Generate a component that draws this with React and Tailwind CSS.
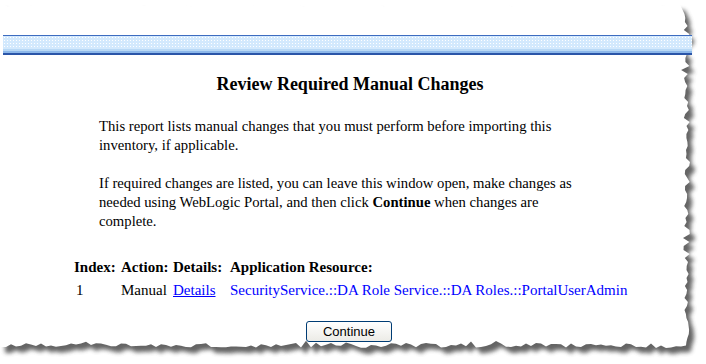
import React from 'react';

// torn paper edge, deterministic noise
const rand=(()=>{let s=7;return ()=>{s=(s*16807)%2147483647;return (s-1)/2147483646;};})();

const buildPaper=()=>{
    const pts=[];
    pts.push([0,4]);
    for(let x=0;x<=680;x+=8) pts.push([x, 3+rand()*4]);
    for(let y=14;y<=342;y+=4){
        const spike=rand()<0.15?-6*rand():0;
        pts.push([684+rand()*6+spike, y]);
    }
    for(let x=686;x>=0;x-=5){
        const spike=rand()<0.15?-5*rand():0;
        pts.push([x, 343+rand()*5+spike]);
    }
    pts.push([0,346]);
    return 'M'+pts.map(p=>`${p[0].toFixed(1)},${p[1].toFixed(1)}`).join(' L')+' Z';
};
const PAPER=buildPaper();

function Paper(){
    return(
        <svg className="absolute inset-0" width="706" height="364" viewBox="0 0 706 364">
            <defs>
                <filter id="blur" x="-5%" y="-5%" width="110%" height="110%">
                    <feGaussianBlur stdDeviation="2.2"/>
                </filter>
            </defs>
            <path d={PAPER} fill="#4a4a4a" opacity="0.85" transform="translate(5,6)" filter="url(#blur)"/>
            <path d={PAPER} fill="#ffffff"/>
        </svg>
    );
}

function App(){
    return(
        <div className="relative w-[706px] h-[364px] overflow-hidden bg-white font-['Liberation_Serif','Times_New_Roman',serif]">
            <Paper/>
            <div className="relative pt-[35px]">
                <div className="ml-[3px] mr-[14px] flex flex-col">
                    <div className="h-px bg-[#3d6cc0]"/>
                    <div className="h-[13px] bg-[#d3e9fd] bg-[radial-gradient(#ffffff_0.6px,transparent_0.7px)] bg-[length:3px_3px]"/>
                    <div className="h-[2px] bg-[#b9d9f6]"/>
                    <div className="h-[2px] bg-[#8db8ea]"/>
                    <div className="h-[2px] bg-[#2a55a8]"/>
                </div>

                <h1 className="mt-[19px] pr-[6px] text-center text-[18px] leading-[21px] font-bold text-black">Review Required Manual Changes</h1>

                <div className="ml-[99px] w-[485px] mt-[22px] text-[14.7px] leading-[19px] text-black">
                    <p>This report lists manual changes that you must perform before importing this inventory, if applicable.</p>
                    <p className="mt-[19px]">If required changes are listed, you can leave this window open, make changes as needed using WebLogic Portal, and then click <b>Continue</b> when changes are complete.</p>
                </div>

                <div className="ml-[74px] mt-[25px] text-[15px] leading-[23px] text-black">
                    <div className="flex font-bold">
                        <span className="w-[47px]">Index:</span>
                        <span className="w-[52px]">Action:</span>
                        <span className="w-[57px]">Details:</span>
                        <span>Application Resource:</span>
                    </div>
                    <div className="flex">
                        <span className="w-[47px] pl-[2px]">1</span>
                        <span className="w-[52px]">Manual</span>
                        <span className="w-[57px]"><a className="text-[#0000ff] underline">Details</a></span>
                        <span className="text-[#0000ff]">SecurityService.::DA Role Service.::DA Roles.::PortalUserAdmin</span>
                    </div>
                </div>

                <div className="flex justify-center mt-[19px] pr-[8px]">
                    <button className="w-[86px] h-[21px] rounded-[3px] border border-[#003c74] bg-gradient-to-b from-white to-[#ecebe6] text-[13px] leading-none text-black font-['Liberation_Sans',Arial,sans-serif]">Continue</button>
                </div>
            </div>
        </div>
    );
}

export default App;
